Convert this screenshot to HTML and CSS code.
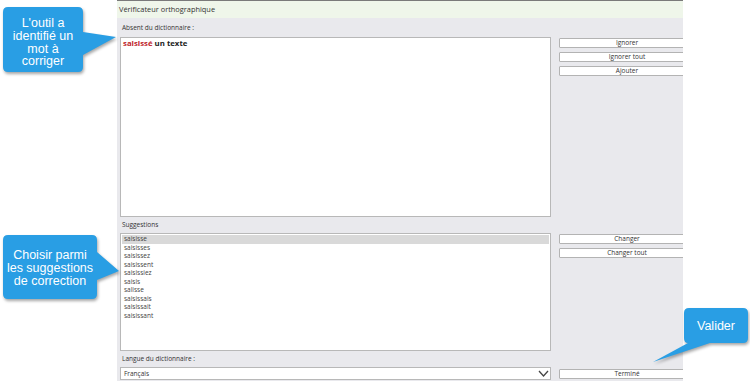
FILE: index.html
```html
<!DOCTYPE html>
<html>
<head>
  <title>Vérificateur orthographique</title>
  <link rel="stylesheet" href="styles.css">
</head>
<body>
  <div class="dialog">
    <div class="title">Vérificateur orthographique</div>

    <div class="content">
      <div class="label">Absent du dictionnaire :</div>
      <div class="row">
        <div class="text-box">
          <span class="wrong">saisissé</span> un texte
        </div>
        <div class="btn-col">
          <button>Ignorer</button>
          <button>Ignorer tout</button>
          <button>Ajouter</button>
        </div>
      </div>

      <div class="label">Suggestions</div>
      <div class="row">
        <ul class="list-box">
          <li class="selected">saisisse</li>
          <li>saisisses</li>
          <li>saisissez</li>
          <li>saisissent</li>
          <li>saisissiez</li>
          <li>saisis</li>
          <li>salisse</li>
          <li>saisissais</li>
          <li>saisissait</li>
          <li>saisissant</li>
        </ul>
        <div class="btn-col">
          <button>Changer</button>
          <button>Changer tout</button>
        </div>
      </div>

      <div class="label">Langue du dictionnaire :</div>
      <div class="row last">
        <div class="select">
          Français
          <svg class="chevron" width="11" height="7" viewBox="0 0 11 7"><path d="M1 1 L5.5 6 L10 1" fill="none" stroke="#444" stroke-width="1.3"/></svg>
        </div>
        <div class="btn-col">
          <button>Terminé</button>
        </div>
      </div>
    </div>
  </div>

  <!-- Callouts -->
  <div class="callout c1">
    <svg width="120" height="75" viewBox="0 0 120 75">
      <path class="bubble" d="M8 7 H78 Q83 7 83 12 V32 L116 37 L83 55 V67 Q83 72 78 72 H8 Q3 72 3 67 V12 Q3 7 8 7 Z"/>
    </svg>
    <div class="c-text">L'outil a<br>identifié un<br>mot à<br>corriger</div>
  </div>

  <div class="callout c2">
    <svg width="122" height="75" viewBox="0 0 122 75">
      <path class="bubble" d="M8 5 H92 Q97 5 97 10 V22 L119 41 L97 50 V64 Q97 69 92 69 H8 Q3 69 3 64 V10 Q3 5 8 5 Z"/>
    </svg>
    <div class="c-text">Choisir parmi<br>les suggestions<br>de correction</div>
  </div>

  <div class="callout c3">
    <svg width="100" height="60" viewBox="0 0 100 60">
      <path class="bubble" d="M34 3 H93 Q98 3 98 8 V33 Q98 38 93 38 H60 L3 57 L38 38 Q34 38 34 33 V8 Q34 3 39 3 Z"/>
    </svg>
    <div class="c-text">Valider</div>
  </div>
</body>
</html>
```

FILE: styles.css
```css
body {
  margin: 0;
  width: 750px;
  height: 381px;
  overflow: hidden;
  background: white;
  font-family: 'Open Sans', 'Noto Sans', sans-serif;
  color: #222;
  position: relative;
}

.dialog {
  margin-left: 117px;
  width: 566px;
  height: 381px;
  background: #e9e9ed;
  border-top: 1px solid #7a7a7a;
  box-sizing: border-box;
  overflow: hidden;
}

.title {
  height: 17px;
  line-height: 16px;
  background: #eff6ea;
  font-size: 7.4px;
  padding-left: 2px;
  color: #333;
}

.content {
  padding-left: 3px;
}

.label {
  height: 19px;
  line-height: 20px;
  font-size: 6.5px;
  padding-left: 2px;
  color: #333;
}

.label + .row + .label {
  height: 16px;
  line-height: 15px;
}

.row {
  display: flex;
  gap: 8px;
}

.text-box {
  flex-shrink: 0;
  width: 431px;
  height: 180px;
  box-sizing: border-box;
  background: white;
  border: 1px solid #b8b8b8;
  padding: 0 2px;
  font-size: 7.8px;
  font-weight: bold;
  line-height: 11px;
  color: #222;
}

.wrong {
  color: #c0262c;
}

.btn-col {
  flex-shrink: 0;
  display: flex;
  flex-direction: column;
  gap: 4px;
  padding-top: 1px;
}

.btn-col button {
  width: 136px;
  height: 10px;
  padding: 0;
  border: 1px solid #b3b3b3;
  border-radius: 1px;
  background: white;
  font-family: 'Open Sans', 'Noto Sans', sans-serif;
  font-size: 6.5px;
  line-height: 1;
  color: #333;
}

.list-box {
  flex-shrink: 0;
  width: 431px;
  height: 118px;
  box-sizing: border-box;
  margin: 0;
  padding: 1px 1px 0;
  list-style: none;
  background: white;
  border: 1px solid #b8b8b8;
}

.list-box li {
  height: 8.5px;
  line-height: 8.5px;
  font-size: 6.5px;
  padding-left: 2px;
  color: #444;
}

.list-box li.selected {
  background: #d9d9d9;
}

.select {
  flex-shrink: 0;
  width: 431px;
  height: 13px;
  box-sizing: border-box;
  background: white;
  border: 1px solid #b8b8b8;
  font-size: 6.5px;
  line-height: 11px;
  padding-left: 3px;
  color: #333;
  display: flex;
  justify-content: space-between;
  align-items: center;
}

.chevron {
  margin-right: 1px;
}

.row.last .btn-col {
  padding-top: 2px;
}

/* callouts over the screenshot */
.callout {
  position: absolute;
}

.callout svg {
  display: block;
  filter: drop-shadow(1px 2px 1.5px rgba(0, 0, 0, 0.35));
}

.bubble {
  fill: #299ee4;
}

.c-text {
  position: absolute;
  font-family: 'Liberation Sans', Arial, sans-serif;
  font-size: 12.5px;
  line-height: 12.8px;
  color: white;
  text-align: center;
}

.c1 {
  left: 0;
  top: 0;
}

.c1 .c-text {
  left: 2px;
  top: 17px;
  width: 82px;
}

.c2 {
  left: 0;
  top: 230px;
}

.c2 .c-text {
  left: 2px;
  top: 19px;
  width: 96px;
}

.c3 {
  left: 650px;
  top: 305px;
}

.c3 .c-text {
  left: 34px;
  top: 15px;
  width: 64px;
}
```
